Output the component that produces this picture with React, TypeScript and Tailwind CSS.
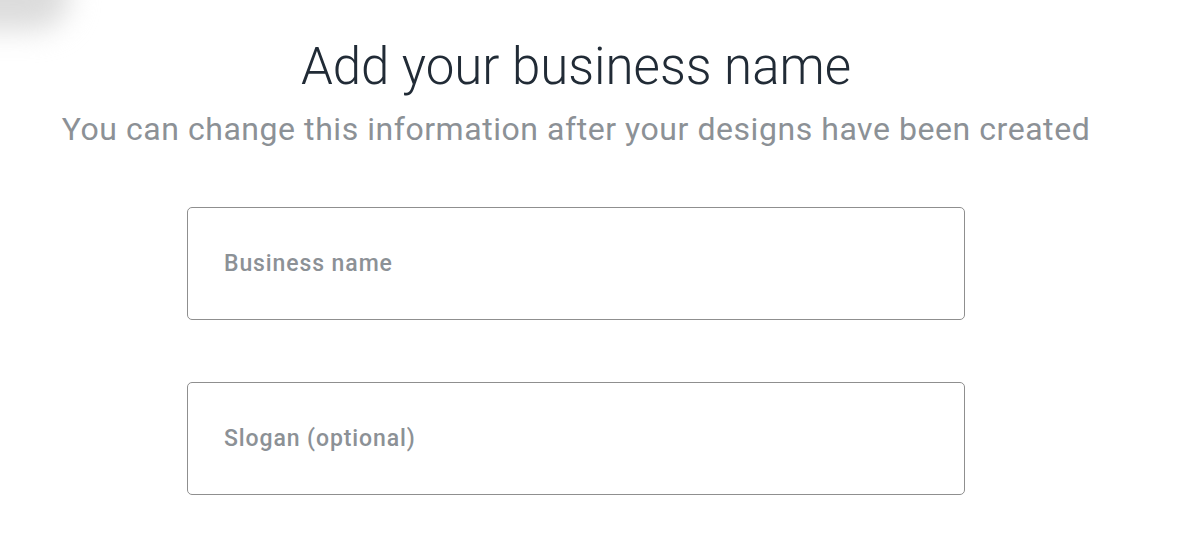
export default function App() {
  return (
    <div className="relative h-[551px] w-[1197px] overflow-hidden bg-white font-['Roboto',sans-serif]">
      <div className="absolute -left-[60px] -top-[40px] h-[70px] w-[130px] rounded-full bg-[#dcdcdc] blur-[14px]" />
      <div className="relative flex w-[1152px] flex-col items-center pt-[36px]">
        <h1 className="text-[51px] font-light leading-[62px] text-[#212b36]">Add your business name</h1>
        <p className="mt-[12px] text-[32px] leading-[38px] tracking-[0.55px] text-[#8c9196]">
          You can change this information after your designs have been created
        </p>
        <div className="mt-[59px] flex flex-col gap-[62px]">
          <input
            placeholder="Business name"
            className="h-[113px] w-[778px] rounded-[5px] border border-[#8f8f8f] px-[36px] text-[23px] font-medium tracking-[0.9px] text-[#212b36] outline-none placeholder:text-[#8c9196]"
          />
          <input
            placeholder="Slogan (optional)"
            className="h-[113px] w-[778px] rounded-[5px] border border-[#8f8f8f] px-[36px] text-[23px] font-medium tracking-[0.9px] text-[#212b36] outline-none placeholder:text-[#8c9196]"
          />
        </div>
      </div>
    </div>
  );
}
